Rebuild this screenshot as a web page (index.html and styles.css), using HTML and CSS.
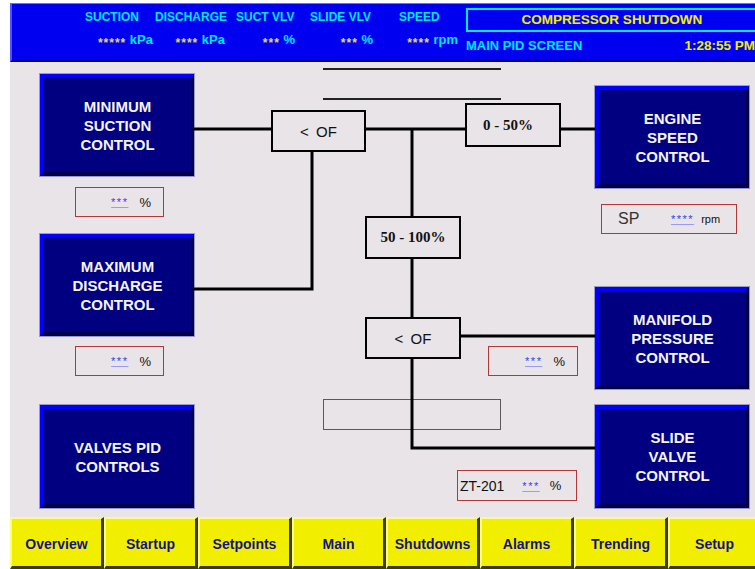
FILE: index.html
```html
<!DOCTYPE html>
<html lang="en">
<head>
  <meta charset="UTF-8">
  <title>Main PID Screen</title>
  <link rel="stylesheet" href="styles.css">
</head>
<body>

  <div class="screen">

    <div class="header">
      <div class="readings">
        <div class="labels">
          <span>SUCTION</span>
          <span>DISCHARGE</span>
          <span>SUCT VLV</span>
          <span>SLIDE VLV</span>
          <span>SPEED</span>
        </div>
        <div class="values">
          <span><i class="stars">*****</i> kPa</span>
          <span><i class="stars">****</i> kPa</span>
          <span><i class="stars">***</i> %</span>
          <span><i class="stars">***</i> %</span>
          <span><i class="stars">****</i> rpm</span>
        </div>
      </div>
      <div class="status">
        <div class="alarm">COMPRESSOR SHUTDOWN</div>
        <div class="status-row">
          <span class="screen-name">MAIN PID SCREEN</span>
          <span class="clock">1:28:55 PM</span>
        </div>
      </div>
    </div>

    <div class="diagram">
      <!-- wiring between the controllers -->
      <svg class="wires" width="745" height="455" viewBox="0 0 745 455">
        <g stroke="#222" stroke-width="2" fill="none">
          <line x1="313" y1="7" x2="491" y2="7" />
          <line x1="313" y1="37" x2="491" y2="37" />
        </g>
        <g stroke="#000" stroke-width="3" fill="none">
          <line x1="184" y1="67" x2="261" y2="67" />
          <line x1="356" y1="67" x2="455" y2="67" />
          <line x1="551" y1="67" x2="585" y2="67" />
          <polyline points="302,90 302,227 184,227" />
          <line x1="402" y1="66" x2="402" y2="154" />
          <line x1="402" y1="197" x2="402" y2="255" />
          <line x1="356" y1="274" x2="585" y2="274" />
          <polyline points="402,297 402,386 585,386" />
        </g>
      </svg>

      <div class="ctrl min-suction">MINIMUM<br>SUCTION<br>CONTROL</div>
      <div class="ctrl max-discharge">MAXIMUM<br>DISCHARGE<br>CONTROL</div>
      <div class="ctrl valves-pid">VALVES PID<br>CONTROLS</div>
      <div class="ctrl engine-speed">ENGINE<br>SPEED<br>CONTROL</div>
      <div class="ctrl manifold">MANIFOLD<br>PRESSURE<br>CONTROL</div>
      <div class="ctrl slide-valve">SLIDE<br>VALVE<br>CONTROL</div>

      <div class="logic of-top">&lt; OF</div>
      <div class="logic range low-range">0 - 50%</div>
      <div class="logic range high-range">50 - 100%</div>
      <div class="logic of-bottom">&lt; OF</div>

      <div class="blank-box"></div>

      <div class="readout pct-suction"><i class="dots">***</i><span>%</span></div>
      <div class="readout pct-discharge"><i class="dots">***</i><span>%</span></div>
      <div class="readout pct-manifold"><i class="dots">***</i><span>%</span></div>
      <div class="readout sp-speed"><span class="sp">SP</span><i class="dots">****</i><span class="unit">rpm</span></div>
      <div class="readout zt-slide"><span class="tag">ZT-201</span><i class="dots">***</i><span>%</span></div>
    </div>

    <div class="footer">
      <button>Overview</button>
      <button>Startup</button>
      <button>Setpoints</button>
      <button>Main</button>
      <button>Shutdowns</button>
      <button>Alarms</button>
      <button>Trending</button>
      <button>Setup</button>
    </div>

  </div>

</body>
</html>
```

FILE: styles.css
```css
body {
  margin: 0;
  background-color: #ffffff;
  font-family: "Liberation Sans", Arial, sans-serif;
}
.screen {
  margin: 3px 0 0 10px;
  width: 745px;
  height: 566px;
  overflow: hidden;
}

/* header bar */
.header {
  display: flex;
  height: 56px;
  background-color: #0000f0;
  border-top: 1px solid #6a6aff;
  border-left: 2px solid #5555ff;
  border-bottom: 2px solid #0000a0;
  font-weight: bold;
  color: #00e4ff;
}
.readings {
  width: 381px;
  padding-left: 73px;
  flex-shrink: 0;
}
.labels {
  display: grid;
  grid-template-columns: 70px 81px 74px 89px 60px;
  padding-top: 6px;
  font-size: 12px;
  line-height: 14px;
}
.values {
  display: grid;
  grid-template-columns: 68px 72px 70px 78px 85px;
  margin-top: 8px;
  font-size: 13px;
  line-height: 16px;
  text-align: right;
}
.stars {
  font-style: normal;
  font-size: 12px;
  letter-spacing: 1px;
  color: #e0d870;
  vertical-align: -3px;
}
.status {
  width: 289px;
  padding-top: 4px;
}
.alarm {
  width: 288px;
  height: 20px;
  border: 2px solid #00e8ff;
  color: #f0f000;
  font-size: 13.5px;
  line-height: 20px;
  text-align: center;
}
.status-row {
  display: flex;
  justify-content: space-between;
  margin-top: 6px;
  line-height: 16px;
}
.screen-name {
  font-size: 13px;
}
.clock {
  font-size: 13.5px;
  color: #f0f000;
}

/* diagram canvas */
.diagram {
  position: relative;
  height: 455px;
  background-color: #e8e4e8;
}
.wires {
  position: absolute;
  left: 0;
  top: 0;
  z-index: 1;
}
.ctrl {
  position: absolute;
  width: 147px;
  height: 94px;
  display: flex;
  align-items: center;
  justify-content: center;
  text-align: center;
  background-color: #000080;
  border-style: solid;
  border-width: 4px 3px 4px 4px;
  border-color: #0000ff #00004c #00004c #0000ff;
  box-shadow: 0 0 0 1px #9a9ac6;
  color: #f4f4f4;
  font-weight: bold;
  font-size: 15px;
  line-height: 19px;
}
.min-suction { left: 30px; top: 12px; }
.max-discharge { left: 30px; top: 172px; }
.valves-pid { left: 30px; top: 343px; height: 95px; }
.engine-speed { left: 585px; top: 24px; }
.manifold { left: 585px; top: 225px; }
.slide-valve { left: 585px; top: 343px; height: 95px; }

.logic {
  position: absolute;
  z-index: 2;
  display: flex;
  align-items: center;
  justify-content: center;
  width: 92px;
  height: 38px;
  border: 2px solid #000;
  background-color: #e8e4e8;
  font-size: 15px;
  word-spacing: 3px;
  color: #111;
}
.range {
  font-family: "Liberation Serif", "Times New Roman", serif;
  font-weight: bold;
  word-spacing: 0;
}
.of-top { left: 261px; top: 48px; width: 91px; }
.low-range { left: 455px; top: 41px; height: 40px; justify-content: flex-start; padding-left: 16px; width: 76px; }
.high-range { left: 355px; top: 154px; height: 39px; }
.of-bottom { left: 355px; top: 255px; }

.blank-box {
  position: absolute;
  left: 313px;
  top: 337px;
  width: 176px;
  height: 29px;
  border: 1px solid #5a5a5a;
}

.readout {
  position: absolute;
  display: flex;
  align-items: center;
  justify-content: flex-end;
  gap: 11px;
  height: 28px;
  padding-right: 12px;
  border: 1px solid #b03838;
  font-size: 13px;
  color: #111;
}
.dots {
  font-style: normal;
  font-size: 11px;
  letter-spacing: 1.5px;
  color: #3a3af0;
  text-decoration: underline;
  text-decoration-color: #9a9af8;
}
.pct-suction { left: 65px; top: 125px; width: 75px; }
.pct-discharge { left: 65px; top: 284px; width: 75px; }
.pct-manifold { left: 478px; top: 284px; width: 76px; }
.sp-speed {
  left: 591px;
  top: 142px;
  width: 134px;
  padding-right: 0;
  justify-content: flex-start;
  gap: 0;
}
.sp-speed .sp {
  margin-left: 16px;
  width: 53px;
  font-size: 16px;
  color: #333;
}
.sp-speed .unit {
  margin-left: 7px;
  font-size: 11px;
}
.zt-slide {
  left: 447px;
  top: 408px;
  width: 106px;
  height: 29px;
  justify-content: flex-start;
  gap: 0;
}
.zt-slide .tag {
  margin-left: 2px;
  margin-right: 18px;
  font-size: 14px;
}
.zt-slide .dots {
  margin-right: 10px;
}

/* navigation buttons */
.footer {
  display: flex;
  height: 52px;
}
.footer button {
  width: 94px;
  flex-shrink: 0;
  height: 52px;
  margin: 0;
  padding: 3px 0 0 0;
  background-color: #f2ee00;
  border-style: solid;
  border-width: 2px 3px 3px 2px;
  border-color: #fbfb8a #3e3e00 #3e3e00 #fbfb8a;
  font-family: "Liberation Sans", Arial, sans-serif;
  font-weight: bold;
  font-size: 14px;
  color: #12128a;
  cursor: pointer;
}
```
